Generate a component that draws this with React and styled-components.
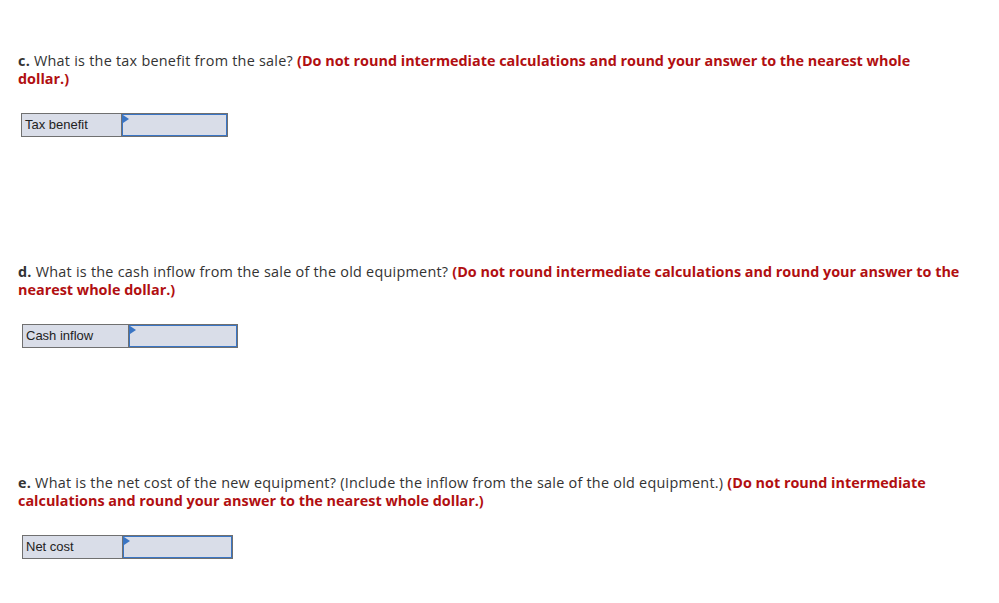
import styled, { createGlobalStyle } from 'styled-components';

const GlobalStyle = createGlobalStyle`
  html, body {
    margin: 0;
    padding: 0;
    background: #ffffff;
  }
`;

const Page = styled.div`
  padding: 52px 18px 0 18px;
  width: 999px;
  box-sizing: border-box;
  font-family: 'Open Sans', 'Lato', sans-serif;
`;

const Question = styled.div`
  height: 211px;

  &:last-child {
    height: auto;
  }
`;

const Prompt = styled.p`
  margin: 0;
  font-size: 14.4px;
  line-height: 18px;
  letter-spacing: 0.25px;
  color: #333;
  max-width: 944px;
`;

const Letter = styled.b`
  font-weight: 700;
`;

const Hint = styled.b`
  color: #b10f11;
  font-weight: 700;
  letter-spacing: 0;
`;

const AnswerRow = styled.div`
  display: flex;
  margin: 25px 0 0 ${(p) => p.$indent}px;
  width: max-content;
  border: 1px solid #707070;
  background: #d9dde8;
  height: 22px;
`;

const Label = styled.div`
  width: ${(p) => p.$w}px;
  box-sizing: border-box;
  padding: 0 3px;
  border-right: 1px solid #707070;
  font-family: 'Liberation Sans', Arial, sans-serif;
  font-size: 13px;
  line-height: 22px;
  color: #222;
`;

const Field = styled.div`
  position: relative;
  width: ${(p) => p.$w}px;
  box-sizing: border-box;
  border: 1px solid #3a75c4;
  background: #d9dde8;
`;

const Flag = styled.span`
  position: absolute;
  top: 0;
  left: 0;
  width: 0;
  height: 0;
  border-top: 4px solid transparent;
  border-bottom: 4px solid transparent;
  border-left: 6px solid #3a75c4;
`;

function Answer({ label, labelW, fieldW, indent }) {
  return (
    <AnswerRow $indent={indent}>
      <Label $w={labelW}>{label}</Label>
      <Field $w={fieldW}>
        <Flag />
      </Field>
    </AnswerRow>
  );
}

export default function App() {
  return (
    <>
      <GlobalStyle />
      <Page>
        <Question>
          <Prompt>
            <Letter>c.</Letter> What is the tax benefit from the sale?{' '}
            <Hint>
              (Do not round intermediate calculations and round your answer to the nearest whole dollar.)
            </Hint>
          </Prompt>
          <Answer label="Tax benefit" labelW={100} fieldW={105} indent={3} />
        </Question>
        <Question>
          <Prompt>
            <Letter>d.</Letter> What is the cash inflow from the sale of the old equipment?{' '}
            <Hint>
              (Do not round intermediate calculations and round your answer to the nearest whole dollar.)
            </Hint>
          </Prompt>
          <Answer label="Cash inflow" labelW={106} fieldW={108} indent={4} />
        </Question>
        <Question>
          <Prompt>
            <Letter>e.</Letter> What is the net cost of the new equipment? (Include the inflow from the
            sale of the old equipment.){' '}
            <Hint>
              (Do not round intermediate calculations and round your answer to the nearest whole dollar.)
            </Hint>
          </Prompt>
          <Answer label="Net cost" labelW={100} fieldW={109} indent={4} />
        </Question>
      </Page>
    </>
  );
}
